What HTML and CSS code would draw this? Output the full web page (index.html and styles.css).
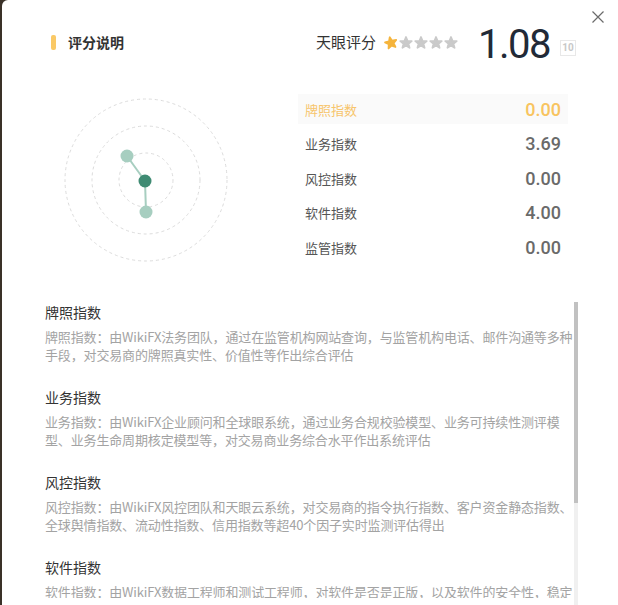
FILE: index.html
```html
<!DOCTYPE html>
<html lang="zh-CN">
<head>
<meta charset="utf-8">
<title>评分说明</title>
<link rel="stylesheet" href="styles.css">
</head>
<body>
<div class="modal">
  <button class="close" aria-label="关闭">
    <svg width="12" height="12" viewBox="0 0 12 12"><path d="M0.5 0.5 L11.5 11.5 M11.5 0.5 L0.5 11.5" stroke="#6b6b6b" stroke-width="1.2" fill="none"/></svg>
  </button>

  <header class="header">
    <div class="title">
      <span class="title-bar"></span>
      <h1 class="title-text">评分说明</h1>
    </div>
    <div class="score">
      <span class="score-label">天眼评分</span>
      <span class="stars">
        <svg class="star star-on" viewBox="-1 -1 14 14"><polygon points="6,0 7.53,3.9 11.71,4.15 8.47,6.8 9.53,10.85 6,8.6 2.47,10.85 3.53,6.8 0.29,4.15 4.47,3.9"/></svg>
        <svg class="star" viewBox="-1 -1 14 14"><polygon points="6,0 7.53,3.9 11.71,4.15 8.47,6.8 9.53,10.85 6,8.6 2.47,10.85 3.53,6.8 0.29,4.15 4.47,3.9"/></svg>
        <svg class="star" viewBox="-1 -1 14 14"><polygon points="6,0 7.53,3.9 11.71,4.15 8.47,6.8 9.53,10.85 6,8.6 2.47,10.85 3.53,6.8 0.29,4.15 4.47,3.9"/></svg>
        <svg class="star" viewBox="-1 -1 14 14"><polygon points="6,0 7.53,3.9 11.71,4.15 8.47,6.8 9.53,10.85 6,8.6 2.47,10.85 3.53,6.8 0.29,4.15 4.47,3.9"/></svg>
        <svg class="star" viewBox="-1 -1 14 14"><polygon points="6,0 7.53,3.9 11.71,4.15 8.47,6.8 9.53,10.85 6,8.6 2.47,10.85 3.53,6.8 0.29,4.15 4.47,3.9"/></svg>
      </span>
      <span class="score-value">1.08</span>
      <span class="score-max">10</span>
    </div>
  </header>

  <section class="overview">
    <div class="radar">
      <svg width="170" height="170" viewBox="0 0 170 170">
        <g fill="none" stroke="#dcdcdc" stroke-width="1" stroke-dasharray="3 3">
          <circle cx="85" cy="85" r="81"/>
          <circle cx="85" cy="85" r="54"/>
          <circle cx="85" cy="85" r="27"/>
        </g>
        <g stroke="#a7cec0" stroke-width="2">
          <line x1="84" y1="86" x2="66" y2="61"/>
          <line x1="84" y1="86" x2="85" y2="117"/>
        </g>
        <circle cx="66" cy="61" r="6.5" fill="#a7cec0"/>
        <circle cx="85" cy="117" r="6.5" fill="#a7cec0"/>
        <circle cx="84" cy="86" r="6.5" fill="#3f8b73"/>
      </svg>
    </div>
    <ul class="index-list">
      <li class="index-row is-active"><span class="index-name">牌照指数</span><span class="index-value">0.00</span></li>
      <li class="index-row"><span class="index-name">业务指数</span><span class="index-value">3.69</span></li>
      <li class="index-row"><span class="index-name">风控指数</span><span class="index-value">0.00</span></li>
      <li class="index-row"><span class="index-name">软件指数</span><span class="index-value">4.00</span></li>
      <li class="index-row"><span class="index-name">监管指数</span><span class="index-value">0.00</span></li>
    </ul>
  </section>

  <section class="details-wrap">
    <div class="details">
      <div class="detail">
        <h2 class="detail-title">牌照指数</h2>
        <p class="detail-text">牌照指数：由WikiFX法务团队，通过在监管机构网站查询，与监管机构电话、邮件沟通等多种<br>手段，对交易商的牌照真实性、价值性等作出综合评估</p>
      </div>
      <div class="detail">
        <h2 class="detail-title">业务指数</h2>
        <p class="detail-text">业务指数：由WikiFX企业顾问和全球眼系统，通过业务合规校验模型、业务可持续性测评模<br>型、业务生命周期核定模型等，对交易商业务综合水平作出系统评估</p>
      </div>
      <div class="detail">
        <h2 class="detail-title">风控指数</h2>
        <p class="detail-text">风控指数：由WikiFX风控团队和天眼云系统，对交易商的指令执行指数、客户资金静态指数、<br>全球舆情指数、流动性指数、信用指数等超40个因子实时监测评估得出</p>
      </div>
      <div class="detail">
        <h2 class="detail-title">软件指数</h2>
        <p class="detail-text">软件指数：由WikiFX数据工程师和测试工程师，对软件是否是正版，以及软件的安全性，稳定<br>性、功能性等方面进行检测并作出综合评估</p>
      </div>
      <div class="detail">
        <h2 class="detail-title">监管指数</h2>
        <p class="detail-text">监管指数：由WikiFX监管团队实时追踪全球监管机构信息，对交易商的监管牌照状态、监管<br>信息披露及违规处罚等情况作出综合评估</p>
      </div>
    </div>
    <div class="scrollbar"><div class="scrollbar-thumb"></div></div>
  </section>
</div>
</body>
</html>
```

FILE: styles.css
```css
* {
  box-sizing: border-box;
}

html, body {
  margin: 0;
  padding: 0;
  height: 100%;
}

body {
  background: #3a3128;
  font-family: "Noto Sans CJK SC", "Noto Sans", sans-serif;
  color: #333;
  overflow: hidden;
}

.modal {
  position: relative;
  margin-left: 2px;
  height: 605px;
  padding-top: 20px;
  background: #fff;
  border-radius: 6px 0 0 0;
}

.close {
  position: absolute;
  top: 11px;
  right: 14px;
  width: 12px;
  height: 12px;
  padding: 0;
  border: 0;
  background: none;
  display: flex;
}

/* Header */
.header {
  display: flex;
  align-items: center;
  justify-content: space-between;
  height: 44px;
  padding: 0 42px 0 49px;
}

.title {
  display: flex;
  align-items: center;
}

.title-bar {
  width: 5px;
  height: 15px;
  border-radius: 2px;
  background: #fac966;
  margin-right: 12px;
}

.title-text {
  margin: 0;
  font-size: 14px;
  font-weight: 700;
  color: #333;
  line-height: 20px;
}

.score {
  display: flex;
  align-items: center;
}

.score-label {
  font-size: 15px;
  color: #333;
  line-height: 20px;
}

.stars {
  display: flex;
  gap: 1px;
  margin-left: 8px;
  margin-top: 1px;
}

.star {
  width: 14px;
  height: 14px;
  fill: #cacaca;
  stroke: #cacaca;
  stroke-width: 1.8;
  stroke-linejoin: round;
}

.star-on {
  fill: #f5b43c;
  stroke: #f5b43c;
  transform: rotate(-12deg);
}

.score-value {
  margin-left: 20px;
  margin-top: 5px;
  font-family: "Roboto", "Liberation Sans", sans-serif;
  font-size: 40px;
  line-height: 40px;
  letter-spacing: -1.5px;
  color: #222a37;
}

.score-max {
  margin-left: 10px;
  margin-top: 12px;
  width: 16px;
  height: 16px;
  border: 1px solid #e8e8e8;
  font-family: "Roboto", "Liberation Sans", sans-serif;
  font-size: 10px;
  font-weight: 700;
  color: #c8c8c8;
  line-height: 14px;
  text-align: center;
}

/* Overview */
.overview {
  display: flex;
  padding-top: 30px;
  padding-left: 59px;
}

.radar {
  width: 237px;
  padding-top: 1px;
}

.radar svg {
  display: block;
}

.index-list {
  list-style: none;
  margin: 0;
  padding: 0;
  width: 270px;
}

.index-row {
  display: flex;
  align-items: center;
  justify-content: space-between;
  height: 30px;
  margin-bottom: 4.5px;
  padding: 0 7px;
}

.index-name {
  font-size: 13px;
  color: #555;
}

.index-value {
  font-family: "Roboto", "Liberation Sans", sans-serif;
  font-size: 18px;
  font-weight: 500;
  color: #6a6a6a;
}

.index-row.is-active {
  background: #fafafa;
}

.index-row.is-active .index-name {
  color: #f7c56c;
}

.index-row.is-active .index-value {
  color: #f8c460;
}

/* Details */
.details-wrap {
  display: flex;
  align-items: flex-start;
  margin: 35px 40px 0 43px;
  height: 303px;
}

.details {
  flex: 1;
  height: 296px;
  overflow: hidden;
}

.scrollbar {
  align-self: stretch;
  width: 4px;
  background: #f0f0f0;
}

.scrollbar-thumb {
  height: 201px;
  background: #c1c1c1;
}

.detail {
  margin-bottom: 23px;
}

.detail-title {
  margin: 0 0 6px;
  font-size: 14px;
  font-weight: 400;
  line-height: 20px;
  color: #333;
}

.detail-text {
  margin: 0;
  font-size: 13px;
  line-height: 18px;
  letter-spacing: -0.15px;
  color: #a3a3a3;
  white-space: nowrap;
}
```
